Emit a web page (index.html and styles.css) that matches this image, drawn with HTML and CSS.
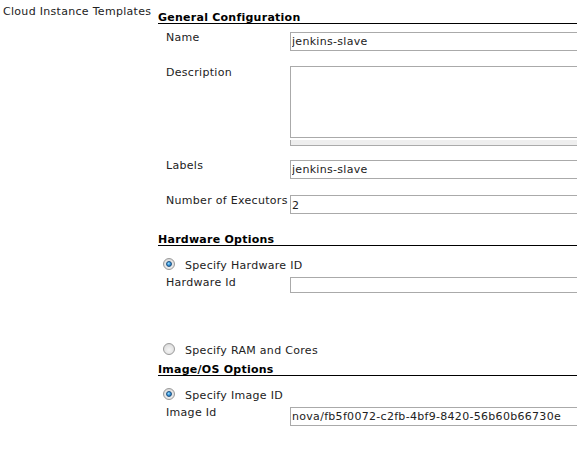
FILE: index.html
```
<!DOCTYPE html>
<html>
<head>
<meta charset="utf-8">
<link rel="stylesheet" href="styles.css">
</head>
<body>
<div class="page">
  <div class="side">Cloud Instance Templates</div>
  <div class="main">
    <div class="head head-first">General Configuration</div>
    <div class="row row-name">
      <div class="lbl">Name</div>
      <div class="fld"><input class="txt" type="text" value="jenkins-slave"></div>
    </div>
    <div class="row row-desc">
      <div class="lbl lbl-desc">Description</div>
      <div class="fld">
        <textarea class="area"></textarea>
        <div class="grippie"></div>
      </div>
    </div>
    <div class="row row-labels">
      <div class="lbl">Labels</div>
      <div class="fld"><input class="txt" type="text" value="jenkins-slave"></div>
    </div>
    <div class="row row-exec">
      <div class="lbl">Number of Executors</div>
      <div class="fld"><input class="txt txt-exec" type="text" value="2"></div>
    </div>
    <div class="head head-hw">Hardware Options</div>
    <div class="radio-row radio-hw">
      <span class="radio checked"></span>
      <span class="radio-label">Specify Hardware ID</span>
    </div>
    <div class="row row-hwid">
      <div class="lbl">Hardware Id</div>
      <div class="fld"><input class="txt txt-short" type="text" value=""></div>
    </div>
    <div class="radio-row radio-ram">
      <span class="radio"></span>
      <span class="radio-label">Specify RAM and Cores</span>
    </div>
    <div class="head head-img">Image/OS Options</div>
    <div class="radio-row radio-img">
      <span class="radio checked"></span>
      <span class="radio-label">Specify Image ID</span>
    </div>
    <div class="row row-imgid">
      <div class="lbl">Image Id</div>
      <div class="fld"><input class="txt" type="text" value="nova/fb5f0072-c2fb-4bf9-8420-56b60b66730e"></div>
    </div>
  </div>
</div>
</body>
</html>
```

FILE: styles.css
```
html, body {
  margin: 0;
  padding: 0;
  overflow: hidden;
  background: #fff;
}

body {
  font-family: "DejaVu Sans", Verdana, sans-serif;
  font-size: 11px;
  line-height: 13px;
  letter-spacing: 0.3px;
  color: #222;
}

.page {
  display: flex;
  align-items: flex-start;
  width: 100%;
  overflow: hidden;
}

.side {
  width: 158px;
  padding: 5px 0 0 3px;
  box-sizing: border-box;
  flex: none;
  white-space: nowrap;
}

.main {
  flex: 1;
  min-width: 0;
}

.head {
  font-weight: bold;
  padding-top: 2px;
  line-height: 10px;
  letter-spacing: 0.25px;
  border-bottom: 1px solid #000;
  color: #000;
}

.head-first { margin-top: 11px; }
.head-hw { margin-top: 19px; }
.head-img { margin-top: 7px; }

.row {
  display: grid;
  grid-template-columns: 124px 1fr;
  align-items: start;
  padding-left: 8px;
}

.lbl {
  margin-top: -1px;
  white-space: nowrap;
}

.lbl-desc { margin-top: 0; }

.fld {
  min-width: 0;
}

.row-name { margin-top: 8px; }
.row-desc { margin-top: 15px; }
.row-labels { margin-top: 14px; }
.row-exec { margin-top: 16px; }
.row-hwid { margin-top: 5px; }
.row-imgid { margin-top: 5px; }

.txt {
  display: block;
  box-sizing: border-box;
  width: calc(100% + 20px);
  height: 19px;
  margin: 0;
  padding: 0 1px;
  border: 1px solid #aaa;
  border-radius: 0;
  font-family: "DejaVu Sans", Verdana, sans-serif;
  font-size: 11px;
  letter-spacing: 0.3px;
  color: #222;
  background: #fff;
  outline: none;
}

.txt-exec {
  padding-top: 2px;
}

.txt-short {
  height: 16px;
}

.area {
  display: block;
  box-sizing: border-box;
  width: calc(100% + 20px);
  height: 72px;
  margin: 0;
  padding: 1px;
  border: 1px solid #aaa;
  border-radius: 0;
  resize: none;
  font-family: "DejaVu Sans", Verdana, sans-serif;
  font-size: 11px;
  background: #fff;
  outline: none;
}

.grippie {
  margin-top: 2px;
  width: calc(100% + 20px);
  height: 5px;
  background: #eee;
  border-left: 1px solid #aaa;
  border-bottom: 1px solid #aaa;
}

.radio-row {
  display: flex;
  align-items: flex-start;
  padding-left: 5px;
}

.radio-hw { margin-top: 13px; }
.radio-ram { margin-top: 51px; }
.radio-img { margin-top: 13px; }
.radio-ram + .head-img { margin-top: 6px; }

.radio {
  position: relative;
  flex: none;
  width: 12px;
  height: 12px;
  margin-top: -1px;
  box-sizing: border-box;
  border-radius: 50%;
  border: 1px solid #9a9a9a;
  background: radial-gradient(circle at 50% 60%, #f6f6f6 0%, #e2e2e2 60%, #c8c8c8 100%);
}

.radio.checked::after {
  content: "";
  position: absolute;
  left: 2px;
  top: 2px;
  width: 6px;
  height: 6px;
  box-sizing: border-box;
  border-radius: 50%;
  border: 1px solid #1c4f80;
  background: radial-gradient(circle at 40% 35%, #9fe0ff 0%, #3a9be0 45%, #1c5f9e 100%);
}

.radio-label {
  margin-left: 10px;
  white-space: nowrap;
}
```
